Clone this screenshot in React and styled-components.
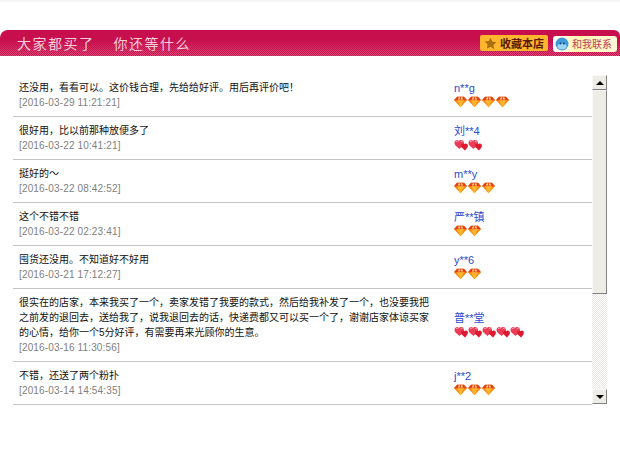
import React from 'react'
import styled, { createGlobalStyle } from 'styled-components'

const Global = createGlobalStyle`
  html, body {
    margin: 0;
    background: #fff;
  }
  body {
    font-family: "Liberation Sans", "Noto Sans CJK SC", sans-serif;
  }
`

const reviews = [
  { text: '还没用，看看可以。这价钱合理，先给给好评。用后再评价吧！', date: '2016-03-29 11:21:21', name: 'n**g', kind: 'gem', count: 4 },
  { text: '很好用，比以前那种放便多了', date: '2016-03-22 10:41:21', name: '刘**4', kind: 'heart', count: 2 },
  { text: '挺好的～', date: '2016-03-22 08:42:52', name: 'm**y', kind: 'gem', count: 3 },
  { text: '这个不错不错', date: '2016-03-22 02:23:41', name: '严**镇', kind: 'gem', count: 2 },
  { text: '囤货还没用。不知道好不好用', date: '2016-03-21 17:12:27', name: 'y**6', kind: 'gem', count: 2 },
  { text: '很实在的店家，本来我买了一个，卖家发错了我要的款式，然后给我补发了一个，也没要我把之前发的退回去，送给我了，说我退回去的话，快递费都又可以买一个了，谢谢店家体谅买家的心情，给你一个5分好评，有需要再来光顾你的生意。', date: '2016-03-16 11:30:56', name: '普**堂', kind: 'heart', count: 5 },
  { text: '不错，还送了两个粉扑', date: '2016-03-14 14:54:35', name: 'j**2', kind: 'gem', count: 3 },
]

const Gem = () => (
  <svg width="14" height="12" viewBox="0 0 14 12">
    <path d="M3 .8h7l3 3.400-6.500 7-6.500-7z" fill="#f78a10" />
    <path d="M3 .8h7l3 3.400H0z" fill="#ea3a20" />
    <path d="M3 4.200l3.500 7 3.500-7z" fill="#ffb52e" />
    <path d="M4.800 1.200h3.400l1 2.400H3.800z" fill="#ffd860" />
    <path d="M6.500 1v3" stroke="#e5391f" strokeWidth="0.8" />
  </svg>
)

const Heart = () => (
  <svg width="14" height="12" viewBox="0 0 14 12">
    <path d="M3.500 1C1.800 1 .5 2.200.5 4c0 2.400 3 4 5 6 2-2 4.500-3.600 4.500-6 0-1.800-1.300-3-3-3-1 0-1.500.5-2 1-.5-.5-1-1-2-1z" fill="#ea3d55" />
    <path d="M2 3c.5-.8 1.500-1 2.300-.6M6.800 2.600c.6-.4 1.300-.3 1.800.2" stroke="#fbb4be" strokeWidth="1" fill="none" />
    <path d="M9.500 4.500c-1.200 0-2.500.9-2.500 2.300 0 1.700 2.300 3 4 4.700 1.500-1.700 2.900-3 2.900-4.700 0-1.400-1-2.300-2.200-2.300-.8 0-1.200.4-1.500.8-.2-.4-.3-.8-.7-.8z" fill="#e0182f" />
  </svg>
)

const Star = () => (
  <svg width="13" height="13" viewBox="0 0 24 24">
    <path d="M12 1.500l3.300 7 7.700 1-5.600 5.300 1.400 7.700L12 18l-6.800 3.500 1.400-7.700L1 8.500l7.700-1z" fill="#a8700f" />
  </svg>
)

const Face = () => (
  <svg width="14" height="14" viewBox="0 0 14 14">
    <circle cx="7" cy="7" r="6.500" fill="#3f9ad8" />
    <ellipse cx="7" cy="9.500" rx="4.500" ry="3" fill="#9fd3f2" />
    <circle cx="5.500" cy="6.500" r="0.900" fill="#123d78" />
    <circle cx="8.800" cy="6.500" r="0.900" fill="#123d78" />
  </svg>
)

export default function App() {
  return (
    <Page>
      <Global />
      <TopRule />
      <Header>
        <Slogan>大家都买了<SloganGap />你还等什么</Slogan>
        <Actions>
          <Favorite><Star />收藏本店</Favorite>
          <Contact><Face />和我联系</Contact>
        </Actions>
      </Header>
      <Panel>
        <List>
          {reviews.map((r) => (
            <Row key={r.date}>
              <Comment>
                <Body>{r.text}</Body>
                <Stamp>[{r.date}]</Stamp>
              </Comment>
              <Buyer>
                <Name>{r.name}</Name>
                <Rank>
                  {Array.from({ length: r.count }).map((_, i) =>
                    r.kind === 'gem' ? <Gem key={i} /> : <Heart key={i} />
                  )}
                </Rank>
              </Buyer>
            </Row>
          ))}
        </List>
        <Scrollbar>
          <ArrowButton><UpArrow /></ArrowButton>
          <Thumb />
          <Track />
          <ArrowButton><DownArrow /></ArrowButton>
        </Scrollbar>
      </Panel>
    </Page>
  )
}

const Page = styled.div`
  width: 620px;
  height: 455px;
  overflow: hidden;
  background: #fff;
`

const TopRule = styled.div`
  height: 2px;
  margin-bottom: 28px;
  background: #f4f4f4;
`

const Header = styled.div`
  height: 26px;
  display: flex;
  align-items: center;
  justify-content: space-between;
  padding: 0 3px 0 17px;
  border-radius: 8px 6px 0 0;
  background:
    linear-gradient(#c70f4e 10px, rgba(199, 15, 78, 0) 26px),
    repeating-conic-gradient(#dc5580 0 25%, #c70f4e 0 50%) 0 0 / 2px 2px;
`

const Slogan = styled.div`
  display: flex;
  font-family: "Noto Sans CJK SC", sans-serif;
  font-size: 14px;
  letter-spacing: 1.500px;
  color: #f8ccd9;
`

const SloganGap = styled.span`
  width: 19px;
`

const Actions = styled.div`
  display: flex;
  align-items: center;
  gap: 5px;
`

const Favorite = styled.div`
  width: 68px;
  height: 16px;
  box-sizing: border-box;
  padding-left: 4px;
  display: flex;
  align-items: center;
  gap: 3px;
  font-size: 11px;
  font-weight: 700;
  color: #5a1a00;
  background: #ffb52e;
  border-radius: 2px;
`

const Contact = styled.div`
  width: 64px;
  height: 16px;
  box-sizing: border-box;
  padding-left: 2px;
  display: flex;
  align-items: center;
  gap: 3px;
  font-size: 10px;
  color: #c0405a;
  background: linear-gradient(90deg, #ffffff, #fff6b0 40%, #fff8d8);
  border-radius: 3px;
  margin-top: 1px;
`

const Panel = styled.div`
  display: flex;
  align-items: flex-start;
  margin: 18px 0 0 13px;
`

const List = styled.div`
  width: 579px;
`

const Row = styled.div`
  display: flex;
  align-items: center;
  box-sizing: border-box;
  padding-left: 6px;
  border-bottom: 1px solid #c4c4c4;
`

const Comment = styled.div`
  width: 412px;
  margin-right: 23px;
  padding: 6px 0;
  font-size: 10px;
  line-height: 15px;
`

const Body = styled.div`
  color: #111;
`

const Stamp = styled.div`
  color: #808080;
  letter-spacing: 0.150px;
`

const Buyer = styled.div`
  display: flex;
  flex-direction: column;
  margin-bottom: 1px;
`

const Name = styled.div`
  font-size: 11px;
  line-height: 14px;
  color: #2a4bd0;
`

const Rank = styled.div`
  display: flex;
  height: 12px;
  margin-top: 1px;
`

const Scrollbar = styled.div`
  width: 15px;
  height: 329px;
  margin-top: 1px;
  display: flex;
  flex-direction: column;
`

const ArrowButton = styled.div`
  height: 15px;
  flex: none;
  display: flex;
  align-items: center;
  justify-content: center;
  box-sizing: border-box;
  background: #eeece6;
  border-right: 1px solid #808080;
  border-bottom: 1px solid #808080;
  border-top: 1px solid #f8f8f8;
  border-left: 1px solid #f8f8f8;
`

const UpArrow = styled.div`
  width: 0;
  height: 0;
  border: 4px solid transparent;
  border-top: 0;
  border-bottom-color: #000;
`

const DownArrow = styled.div`
  width: 0;
  height: 0;
  border: 4px solid transparent;
  border-bottom: 0;
  border-top-color: #000;
`

const Thumb = styled.div`
  height: 204px;
  flex: none;
  box-sizing: border-box;
  background: #eeece6;
  border-right: 1px solid #808080;
  border-bottom: 1px solid #808080;
  border-top: 1px solid #f8f8f8;
  border-left: 1px solid #f8f8f8;
`

const Track = styled.div`
  flex: 1;
  background: repeating-conic-gradient(#eae8e2 0 25%, #fff 0 50%) 0 0 / 2px 2px;
`
